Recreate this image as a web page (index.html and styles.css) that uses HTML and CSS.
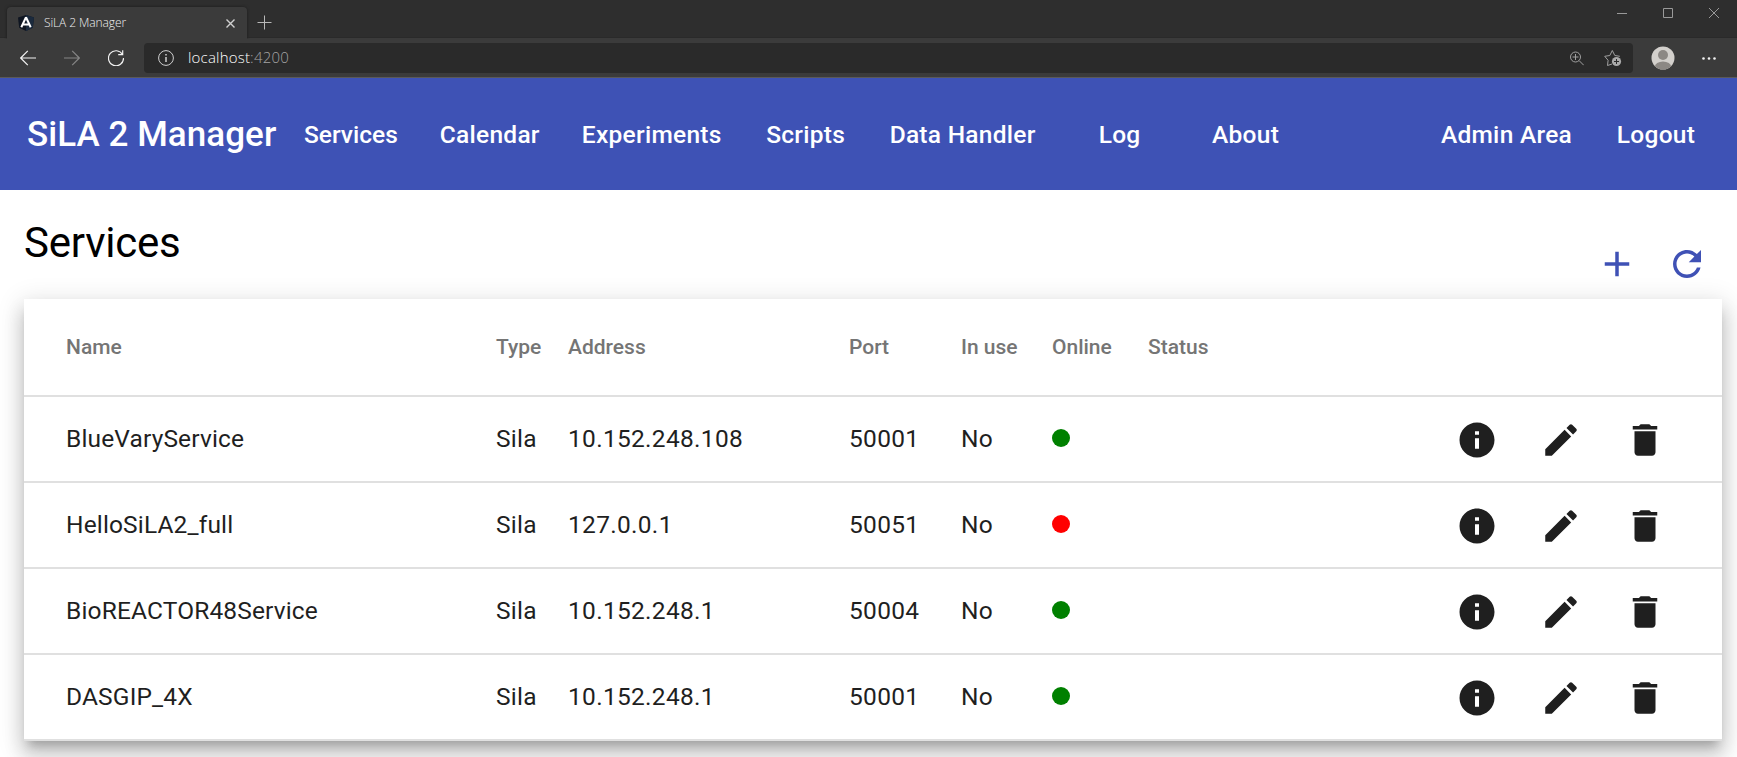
FILE: index.html
```
<!DOCTYPE html>
<html lang="en">
<head>
<meta charset="utf-8">
<title>SiLA 2 Manager</title>
<link rel="stylesheet" href="styles.css">
</head>
<body>
<svg class="sprite" aria-hidden="true">
  <symbol id="info" viewBox="0 0 24 24"><path d="M12 2C6.48 2 2 6.48 2 12s4.480 10 10 10 10-4.480 10-10S17.520 2 12 2zm1.150 15h-2.300v-6h2.300v6zm0-8h-2.300V7h2.300v2z"/></symbol>
  <symbol id="edit" viewBox="0 0 24 24"><path d="M3 17.250V21h3.750L17.810 9.940l-3.750-3.750L3 17.250zM20.710 7.040c.39-.39.39-1.020 0-1.410l-2.340-2.340c-.39-.39-1.020-.39-1.410 0l-1.830 1.830 3.750 3.750 1.830-1.830z"/></symbol>
  <symbol id="delete" viewBox="0 0 24 24"><path d="M6 19c0 1.100.9 2 2 2h8c1.100 0 2-.9 2-2V7H6v12zM19 4h-3.500l-1-1h-5l-1 1H5v2h14V4z"/></symbol>
</svg>
<header class="browser">
  <div class="tabstrip">
    <div class="tab">
      <svg class="favicon" width="16" height="16" viewBox="0 0 16 16"><path d="M8 0l8 2.500-1.200 10.200L8 16l-6.800-3.300L0 2.500z" fill="#0e1521"/><path d="M8 0l8 2.500-1.200 10.200L8 16z" fill="#1b2a3d"/><path d="M8 2.200L3.300 12.200M8 2.200l4.700 10M5.300 9.600h5.400" stroke="#fff" stroke-width="2" fill="none"/></svg>
      <span class="tab-title">SiLA 2 Manager</span>
      <svg class="tab-close" width="9" height="9" viewBox="0 0 9 9"><path d="M.5.500l8 8M8.500.5l-8 8" stroke="#d0d0d0" stroke-width="1.400"/></svg>
    </div>
    <svg class="new-tab" width="15" height="15" viewBox="0 0 15 15"><path d="M7.500.5v14M.5 7.500h14" stroke="#b8b8b8"/></svg>
    <div class="window-controls">
      <svg width="10" height="10" viewBox="0 0 10 10"><path d="M0 5.500h10"/></svg>
      <svg width="10" height="10" viewBox="0 0 10 10"><path d="M.5.500h9v9h-9z"/></svg>
      <svg width="10" height="10" viewBox="0 0 10 10"><path d="M0 0l10 10M10 0L0 10"/></svg>
    </div>
  </div>
  <div class="navbar">
    <div class="nav-icons">
      <svg width="16" height="16" viewBox="0 0 16 16" stroke="#f2f2f2"><path d="M16 8H.700M7.800.800L.7 8l7.100 7.200"/></svg>
      <svg width="16" height="16" viewBox="0 0 16 16" stroke="#858585"><path d="M0 8h15.300M8.200.8L15.300 8l-7.100 7.200"/></svg>
      <svg width="16" height="16" viewBox="0 0 16 16" stroke="#f2f2f2"><path d="M14.500 4.500A7.500 7.500 0 1 0 15.500 8M14.700.3v4.400h-4.500"/></svg>
    </div>
    <div class="address">
      <svg width="16" height="16" viewBox="0 0 16 16" fill="none" stroke="#d0d0d0"><circle cx="8" cy="8" r="7.400"/><path d="M8 7v5M8 4v1.500" stroke-width="1.500"/></svg>
      <span class="url"><span class="host">localhost</span><span class="port">:4200</span></span>
      <svg class="zoom" width="14" height="15" viewBox="0 0 14 15" fill="none" stroke="#a0a0a0"><circle cx="5.500" cy="6" r="5"/><path d="M5.500 3v6M2.500 6h6M9.200 9.700l4.500 4.500"/></svg>
      <svg class="star" width="18" height="18" viewBox="0 0 18 18" fill="none" stroke="#a0a0a0"><path d="M8 15L3.500 16.500l.6-5.200L.7 7.300l5.100-.8L8.300 1.500l2.500 5 5 .8"/><circle cx="12.500" cy="12.500" r="4.600" fill="#aaa" stroke="none"/><path d="M12.500 10v5M10 12.500h5" stroke="#2a2a2a"/></svg>
    </div>
    <svg class="avatar" width="24" height="24" viewBox="0 0 24 24"><defs><clipPath id="avatar-clip"><circle cx="12" cy="12" r="11.500"/></clipPath></defs><g clip-path="url(#avatar-clip)"><path d="M0 0h24v24H0z" fill="#d3d0cc"/><circle cx="12" cy="9" r="5" fill="#8c8884"/><ellipse cx="12" cy="21" rx="8.200" ry="5.500" fill="#8c8884"/></g></svg>
    <svg class="more" width="14" height="3" viewBox="0 0 14 3" fill="#f2f2f2"><circle cx="1.500" cy="1.500" r="1.300"/><circle cx="7" cy="1.500" r="1.300"/><circle cx="12.500" cy="1.500" r="1.300"/></svg>
  </div>
</header>
<nav class="toolbar">
  <span class="brand">SiLA 2 Manager</span>
  <a class="current">Services</a><a>Calendar</a><a>Experiments</a><a>Scripts</a><a>Data Handler</a><a>Log</a><a>About</a>
  <span class="spacer"></span>
  <a>Admin Area</a><a>Logout</a>
</nav>
<main>
  <div class="page-head">
    <h1>Services</h1>
    <div class="page-actions">
      <svg width="42" height="42" viewBox="0 0 24 24"><path d="M19 13h-6v6h-2v-6H5v-2h6V5h2v6h6v2z"/></svg>
      <svg width="42" height="42" viewBox="0 0 24 24"><path d="M17.650 6.350C16.200 4.900 14.210 4 12 4c-4.420 0-7.990 3.580-7.990 8s3.570 8 7.990 8c3.730 0 6.840-2.550 7.730-6h-2.080c-.82 2.330-3.040 4-5.650 4-3.310 0-6-2.690-6-6s2.690-6 6-6c1.660 0 3.140.69 4.220 1.780L13 11h7V4l-2.350 2.350z"/></svg>
    </div>
  </div>
  <section class="table">
    <div class="row head"><span>Name</span><span>Type</span><span>Address</span><span>Port</span><span>In use</span><span>Online</span><span>Status</span><span></span></div>
    <div class="row"><span class="name">BlueVaryService</span><span>Sila</span><span>10.152.248.108</span><span>50001</span><span>No</span><span><i class="dot"></i></span><span></span><span class="actions"><svg><use href="#info"/></svg><svg><use href="#edit"/></svg><svg><use href="#delete"/></svg></span></div>
    <div class="row"><span class="name">HelloSiLA2_full</span><span>Sila</span><span>127.0.0.1</span><span>50051</span><span>No</span><span><i class="dot offline"></i></span><span></span><span class="actions"><svg><use href="#info"/></svg><svg><use href="#edit"/></svg><svg><use href="#delete"/></svg></span></div>
    <div class="row"><span class="name">BioREACTOR48Service</span><span>Sila</span><span>10.152.248.1</span><span>50004</span><span>No</span><span><i class="dot"></i></span><span></span><span class="actions"><svg><use href="#info"/></svg><svg><use href="#edit"/></svg><svg><use href="#delete"/></svg></span></div>
    <div class="row"><span class="name">DASGIP_4X</span><span>Sila</span><span>10.152.248.1</span><span>50001</span><span>No</span><span><i class="dot"></i></span><span></span><span class="actions"><svg><use href="#info"/></svg><svg><use href="#edit"/></svg><svg><use href="#delete"/></svg></span></div>
  </section>
</main>
</body>
</html>
```

FILE: styles.css
```
* { box-sizing: border-box; }
body { margin: 0; height: 757px; overflow: hidden; background: #fff; font-family: Roboto, sans-serif; }
svg { display: block; flex: none; }
.sprite { display: none; }

.browser { height: 78px; background: #3b3b3b; border-bottom: 1px solid #5b5a58; font-family: "Open Sans", sans-serif; }
.tabstrip { height: 39px; display: flex; align-items: flex-start; padding: 7px 18px 0 7px; background: linear-gradient(#2e2e2e 37px, #262626 38px, #3b3b3b 38px); }
.tab { width: 240px; height: 32px; display: flex; align-items: center; padding: 0 12px 0 11px; background: #3b3b3b; border-radius: 4px 4px 0 0; box-shadow: 0 0 3px #1c1c1c; clip-path: inset(-4px -4px 0 -4px); }
.tab-title { margin-left: 10px; padding-bottom: 1px; font-size: 12px; font-weight: 300; color: #f0f0f0; letter-spacing: -0.1px; }
.tab-close { margin-left: auto; }
.new-tab { margin: 8px 0 0 10px; }
.window-controls { margin-left: auto; display: flex; gap: 36px; padding-top: 1px; fill: none; stroke: #999; }
.navbar { height: 38px; display: flex; align-items: center; padding: 0 21px 0 20px; }
.nav-icons { display: flex; gap: 28px; width: 124px; fill: none; stroke-width: 1.200; }
.address { width: 1489px; height: 30px; display: flex; align-items: center; padding: 0 11px 0 14px; background: #2a2a2a; border-radius: 4px; }
.url { margin-left: 14px; padding-bottom: 2px; font-size: 15px; line-height: 20px; font-weight: 300; letter-spacing: 0.2px; }
.host { color: #fff; }
.port { color: #a4a4a4; }
.zoom { margin-left: auto; margin-right: 20px; }
.avatar { margin-left: 18px; }
.more { margin-left: 27px; }

.toolbar { height: 112px; display: flex; align-items: center; padding: 0 18px 0 27px; background: #3e52b5; color: #fff; font-size: 24.500px; font-weight: 500; }
.brand { width: 256px; font-size: 35px; letter-spacing: 0.05px; white-space: nowrap; }
.toolbar a { min-width: 126px; padding: 0 21px; text-align: center; white-space: nowrap; letter-spacing: 0.27px; }
.toolbar .current { letter-spacing: 0; }
.spacer { flex: 1; }

.page-head { height: 109px; display: flex; justify-content: space-between; padding: 0 29px 0 24px; }
h1 { margin: 25px 0 0; font-size: 42px; line-height: 56px; font-weight: 400; letter-spacing: -0.22px; color: #000; }
.page-actions { display: flex; gap: 28px; padding-top: 53px; fill: #3f51b5; }

.table { width: 1698px; margin-left: 24px; background: #fff; color: #1f1f1f; font-size: 24.500px; box-shadow: 0 9px 9px -5px rgba(0,0,0,.2), 0 14px 17.500px 2px rgba(0,0,0,.14), 0 5px 24.500px 3.500px rgba(0,0,0,.12); }
.row { height: 86px; display: grid; grid-template-columns: 430px 72px 281px 112px 91px 96px 308px auto; align-items: center; padding: 0 42px 2px; border-bottom: 2px solid #e0e0e0; white-space: nowrap; letter-spacing: 0.3px; }
.name { letter-spacing: 0.150px; }
.row.head { height: 98px; padding-bottom: 0; font-size: 21px; font-weight: 500; letter-spacing: 0; color: #757575; }
.dot { display: block; width: 18px; height: 18px; border-radius: 50%; background: #008000; }
.dot.offline { background: #f00; }
.actions { display: flex; gap: 42px; padding-top: 3px; fill: #1f1f1f; }
.actions svg { width: 42px; height: 42px; }
```
